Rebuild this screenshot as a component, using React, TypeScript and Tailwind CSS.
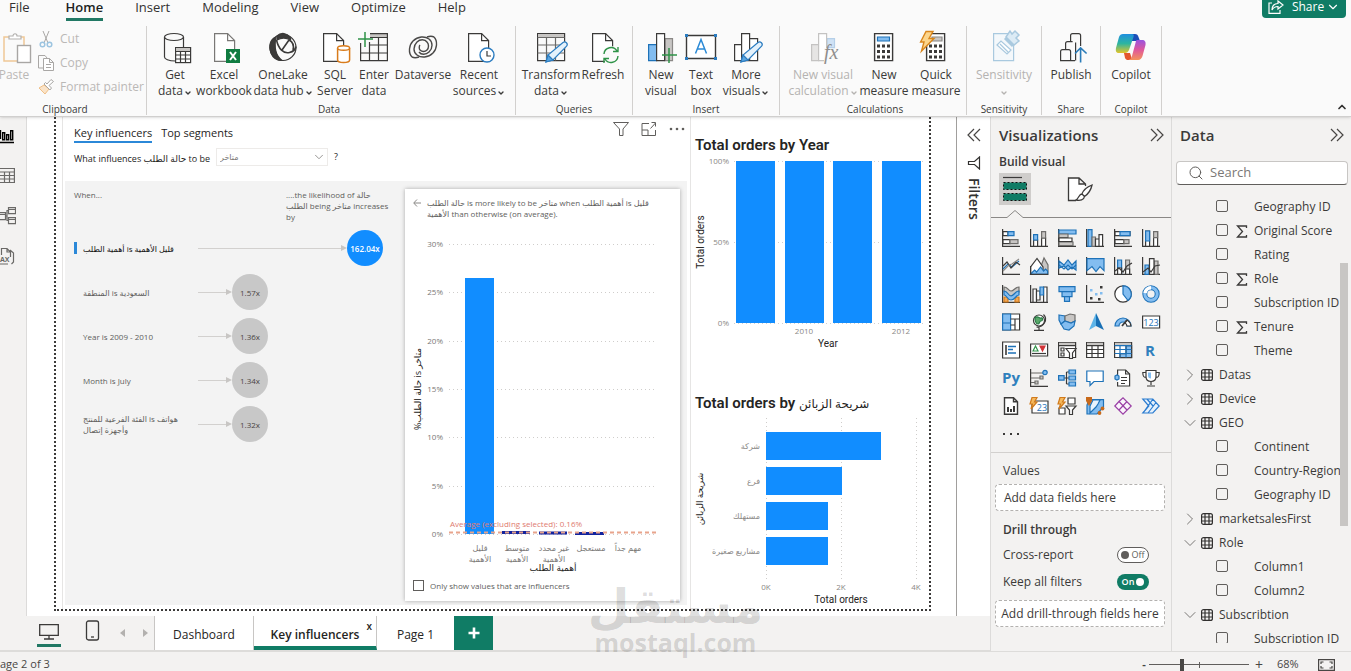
import type { ReactNode } from "react";
import { ChevronDown, ChevronRight, ChevronUp, Search } from "lucide-react";

const INK = "#3b3a39";
const BLUE = "#83bdf0";
const LINE = "#1e72b8";
const GREY = "#c8c6c4";

type IconProps = { children: ReactNode };

/* Ribbon drawings share one 32x30 box */
function RibbonIcon({ children }: IconProps) {
  return (
    <svg
      width="32"
      height="30"
      viewBox="0 0 32 30"
      fill="none"
      stroke={INK}
      strokeWidth="1.2"
      className="shrink-0 overflow-visible"
      aria-hidden="true"
    >
      {children}
    </svg>
  );
}

function DoubleChevron({ left }: { left?: boolean }) {
  return (
    <svg width="14" height="14" viewBox="0 0 14 14" fill="none" stroke="#484644" strokeWidth="1.200" aria-hidden="true">
      <path d={left ? "M7 1L1 7l6 6M13 1L7 7l6 6" : "M1 1l6 6-6 6M7 1l6 6-6 6"} />
    </svg>
  );
}

function Doc({ x = 5, color = INK }: { x?: number; color?: string }) {
  return (
    <g transform={`translate(${x} 0)`} stroke={color}>
      <path d="M.6.6h13l7 7v20.8H.6z" fill="#fff" />
      <path d="M13.600.6v7h7" />
    </g>
  );
}

function Pencil() {
  return (
    <g stroke="#2b7cc0">
      <path d="M11 29l2-7L28 9.500a2.600 2.600 0 0 1 3.600 3.700L18 27z" fill="#e4f1fb" />
      <path d="M11 29l2-7 5 5z" fill="#5aa5e0" />
    </g>
  );
}

function Plus({ x, y }: { x: number; y: number }) {
  return (
    <path
      d={`M${x - 7} ${y}h15M${x} ${y - 7}v15`}
      stroke="#2f9348"
      strokeWidth="1.500"
    />
  );
}

const ribbonIcons: Record<string, ReactNode> = {
  getData: (
    <>
      <path d="M5.500 4v20c0 2 4 4 11 4M24.500 4v11" />
      <ellipse cx="15" cy="4" rx="9.500" ry="3.500" />
      <rect x="16.600" y="14.600" width="15" height="15" fill="#fff" />
      <path d="M17 16.500h14" stroke={GREY} strokeWidth="3" />
      <path d="M16.600 18.500h15M16.600 22h15M16.600 26h15M21.500 18.500v11M26.500 18.500v11" />
    </>
  ),
  excel: (
    <>
      <Doc x={6} color="#7a7876" />
      <rect x="18" y="16" width="14" height="14" fill="#107c41" stroke="none" />
      <path d="M22 19l6 8M28 19l-6 8" stroke="#fff" strokeWidth="2" />
    </>
  ),
  oneLake: (
    <>
      <circle cx="16" cy="14.500" r="13" />
      <path d="M9 4C3 6 1.500 13 4 20c2 5 6 7.500 11 7.500C9 23 7 14 9 4z" fill={INK} />
      <path d="M10 3c4-4 10-3 13 1 1 1 1 2 .5 3C20 5 15 4 10 7z" fill={INK} />
      <path d="M9.500 7c2 9 7 14 13 12.500 4-1 6-3 6.500-6M22 7c4 2 5 6 4 10M15 17l7-10" strokeWidth="1.600" />
    </>
  ),
  sql: (
    <>
      <Doc x={4} />
      <path
        d="M18.600 15v12c0 1.500 2.500 2.500 6 2.500s6-1 6-2.500V15"
        fill="#fff"
        stroke="#d97c1c"
        strokeWidth="1.500"
      />
      <ellipse cx="24.600" cy="15" rx="6" ry="2.300" fill="#fff" stroke="#d97c1c" strokeWidth="1.500" />
    </>
  ),
  enterData: (
    <>
      <path d="M12 2.500h18" stroke={GREY} strokeWidth="3" />
      <path d="M12 .6h17.400v27H2.600V10M12 4.500h17.400M12 12h17.400M2.600 20h26.800M11.500 9v18.600M20.500 4.500v23" />
      <Plus x={7} y={6} />
    </>
  ),
  dataverse: (
    <g strokeWidth="1.400" stroke="#4a4948">
      <path d="M27 4c4 4 3 12-1 16-5 5-12 5-16 2-4-3-4-9 0-13 3-3 8-3 10 0 2 2 2 6 0 8-2 2-5 2-7 0-1-1-1-4 0-5" />
      <path d="M5 24c-4-4-3-12 1-16 5-5 12-5 16-2 4 3 4 9 0 13-3 3-8 3-10 0" />
      <path d="M20 4c3-1 5-1 7 0M12 24c-3 1-5 1-7 0" />
    </g>
  ),
  recent: (
    <>
      <Doc x={5} />
      <circle cx="24" cy="22" r="7" fill="#fff" stroke="#2b7cc0" strokeWidth="1.400" />
      <path d="M24 18v5h4" />
    </>
  ),
  transform: (
    <>
      <path d="M2.600.6h27v27h-27z" />
      <path d="M3 2.500h26" stroke={GREY} strokeWidth="3" />
      <path d="M2.600 4.500h27M2.600 12h27M2.600 20h27M11.500 4.500v23M20.500 4.500v23" stroke="#6a6967" />
      <Pencil />
    </>
  ),
  refresh: (
    <>
      <Doc x={5} />
      <circle cx="24" cy="22" r="9" fill="#fafafa" stroke="none" />
      <path
        d="M17 21a7 7 0 0 1 13-3M31 23a7 7 0 0 1-13 3M31 14v4.500h-5M17 30v-4.500h5"
        stroke="#2f9348"
        strokeWidth="1.400"
      />
    </>
  ),
  newVisual: (
    <>
      <path d="M3.600 11.600h8v16h-8z" fill={BLUE} stroke={LINE} />
      <path d="M20 5.600h7.500v22H20z" fill={GREY} stroke="#8a8886" />
      <path d="M11.600.6h8v27h-8z" fill="#fff" />
      <Plus x={24} y={22} />
    </>
  ),
  textBox: (
    <>
      <path d="M1.500 2.500h29v23h-29z" fill="#fff" strokeWidth="1.400" />
      <path d="M0 1h3v3H0zM29 1h3v3h-3zM0 24h3v3H0zM29 24h3v3h-3z" fill="#2b7cc0" stroke="none" />
      <path d="M10.500 20.500l5.500-14 5.500 14M12.500 16h7" stroke="#2b8ad6" strokeWidth="1.500" />
    </>
  ),
  moreVisuals: (
    <>
      <path d="M4.600 11.600h7v16h-7zM11.600.6h8v27h-8zM19.600 5.600h8v22h-8z" fill="#fff" />
      <Pencil />
    </>
  ),
  visualCalc: (
    <>
      <path d="M4.600 11.600h7v16h-7z" fill="#e6e5e4" stroke="#c4c3c2" />
      <path d="M20 5.600h7.500v9H20z" fill="#cfe2f5" stroke="#b5cfe8" />
      <path d="M11.600.6h8v27h-8z" fill="#fff" stroke="#c4c3c2" />
      <path d="M17 15h4v14h-4z" fill="#fafafa" stroke="none" />
      <text
        x="17"
        y="26"
        fontSize="20"
        fontStyle="italic"
        fontFamily="Liberation Serif, serif"
        fill="#8f8e8d"
        stroke="none"
      >
        fx
      </text>
    </>
  ),
  newMeasure: (
    <>
      <path d="M6.600.6h18v27h-18z" fill="#fff" strokeWidth="1.400" />
      <path d="M9.500 4h12v4h-12z" fill={BLUE} stroke={LINE} />
      <path d="M9 13h13M9 18.500h13M9 24h13" strokeWidth="3" strokeDasharray="3 2" />
    </>
  ),
  quickMeasure: (
    <>
      <path d="M6.600.6h18v27h-18z" fill="#fff" strokeWidth="1.400" />
      <path d="M12 4h10v4H12z" fill={GREY} stroke="#8a8886" />
      <path d="M9 13h13M9 18.500h13M9 24h13" strokeWidth="3" strokeDasharray="3 2" />
      <path d="M6-1.500h7l-4 7h5L1.500 18 4 9H.6z" fill="#fcd58b" stroke="#d9861c" strokeWidth="1.400" />
    </>
  ),
  sensitivity: (
    <g stroke="#a9c9df">
      <path d="M5.600.6h20v27h-20z" fill="#f4f8fb" />
      <path d="M9 12l4-4 10 9-4 4zM12 11l8 8" fill="#fff" />
      <path d="M18 4l8 8 5-4-3-3 3-3-4-4-3 3-2-3z" fill="#dcebf5" strokeWidth="1.500" />
      <path d="M17 5l8 8" strokeWidth="3" />
    </g>
  ),
  publish: (
    <>
      <path d="M5.600 27.600v-9q0-2 2-2h6q2 0 2 2v9zM10.600 16V10.600q0-2 2-2h5M20 27.600h-5M15.600 8V2.600q0-2 2-2h6q2 0 2 2V13M20.600 9.500v18" />
      <path d="M25.600 29.500V15M20 20.500l5.600-5.600 6 5.600" stroke="#2b7cb8" strokeWidth="1.600" />
    </>
  ),
  copilot: (
    <g stroke="none">
      <defs>
        <linearGradient id="cpA" x1="0" y1="0" x2="0" y2="1">
          <stop offset="0" stopColor="#1f8fe0" />
          <stop offset=".5" stopColor="#2db5a0" />
          <stop offset="1" stopColor="#e3c52a" />
        </linearGradient>
        <linearGradient id="cpB" x1="0" y1="0" x2="0" y2="1">
          <stop offset="0" stopColor="#9a53e0" />
          <stop offset=".5" stopColor="#e0589a" />
          <stop offset="1" stopColor="#f4935a" />
        </linearGradient>
      </defs>
      <path d="M14 1h6c2 0 3 1 3.500 3L25 8h-8z" fill="#1b4fb8" />
      <path d="M8 1h9c2 0 2 1 1.500 3L14 17c-1 2-2 3-4 3H4c-3 0-3.500-2-3-5L4 4c.7-2 2-3 4-3z" fill="url(#cpA)" />
      <path d="M9 20h6l2 6c-4 2-6 1-7-1z" fill="#e4572e" />
      <path d="M22 7h5c3 0 4 2 3.500 5L27.500 23c-.7 2-2 4-4.500 4h-9c2-1 2.500-2 3-4l3.500-13c.4-2 .7-3 1.500-3z" fill="url(#cpB)" />
    </g>
  ),
};

type RibbonItem = {
  icon: string;
  lines: string[];
  width: string;
  menu?: boolean;
  off?: boolean;
};

const ribbonGroups: { label: string; className: string; items: RibbonItem[] }[] = [
  {
    label: "Data",
    className: "pl-1.5 pr-2.5",
    items: [
      { icon: "getData", lines: ["Get", "data"], width: "w-11", menu: true },
      { icon: "excel", lines: ["Excel", "workbook"], width: "w-[54px]" },
      { icon: "oneLake", lines: ["OneLake", "data hub"], width: "w-16", menu: true },
      { icon: "sql", lines: ["SQL", "Server"], width: "w-10" },
      { icon: "enterData", lines: ["Enter", "data"], width: "w-[38px]" },
      { icon: "dataverse", lines: ["Dataverse"], width: "w-[60px]" },
      { icon: "recent", lines: ["Recent", "sources"], width: "w-[52px]", menu: true },
    ],
  },
  {
    label: "Queries",
    className: "px-1.5",
    items: [
      { icon: "transform", lines: ["Transform", "data"], width: "w-[58px]", menu: true },
      { icon: "refresh", lines: ["Refresh"], width: "w-[46px]" },
    ],
  },
  {
    label: "Insert",
    className: "px-2",
    items: [
      { icon: "newVisual", lines: ["New", "visual"], width: "w-10" },
      { icon: "textBox", lines: ["Text", "box"], width: "w-10" },
      { icon: "moreVisuals", lines: ["More", "visuals"], width: "w-[50px]", menu: true },
    ],
  },
  {
    label: "Calculations",
    className: "pr-1 pl-2",
    items: [
      { icon: "visualCalc", lines: ["New visual", "calculation"], width: "w-[70px]", menu: true, off: true },
      { icon: "newMeasure", lines: ["New", "measure"], width: "w-[52px]" },
      { icon: "quickMeasure", lines: ["Quick", "measure"], width: "w-[52px]" },
    ],
  },
  {
    label: "Sensitivity",
    className: "px-1",
    items: [{ icon: "sensitivity", lines: ["Sensitivity", ""], width: "w-[66px]", menu: true, off: true }],
  },
  {
    label: "Share",
    className: "px-1",
    items: [{ icon: "publish", lines: ["Publish"], width: "w-[50px]" }],
  },
  {
    label: "Copilot",
    className: "px-1",
    items: [{ icon: "copilot", lines: ["Copilot"], width: "w-[52px]" }],
  },
];

function RibbonButton({ item }: { item: RibbonItem }) {
  return (
    <button
      type="button"
      disabled={item.off}
      className={`${item.width} flex flex-col items-center text-xs leading-4 whitespace-nowrap ${
        item.off ? "text-[#b5b3b1]" : "text-[#3b3a39]"
      }`}
    >
      <RibbonIcon>{ribbonIcons[item.icon]}</RibbonIcon>
      <span className="mt-1">{item.lines[0]}</span>
      {item.lines.length > 1 && (
        <span className="flex h-4 items-center gap-px">
          {item.lines[1]}
          {item.menu && <ChevronDown className="mt-1 size-2" strokeWidth={4} />}
        </span>
      )}
    </button>
  );
}

function Clipboard() {
  const row = "flex items-center gap-1.5 text-xs leading-6";
  return (
    <div className="flex w-[147px] flex-col border-r border-[#d2d0ce]">
      <div className="flex flex-1 text-[#bab8b6]">
        <button type="button" disabled className="flex w-8 flex-col items-center pt-[7px] text-xs leading-4">
          <RibbonIcon>
            <g stroke="#f0c896" strokeWidth="1.500">
              <path d="M17 28H4V4h20v8" />
            </g>
            <path d="M9 6V3h4c0-3 4-3 4 0h4v3z" fill="#fff" stroke="#b3b1af" />
            <rect x="17.500" y="12.500" width="13" height="17" fill="#fff" stroke="#a8a6a4" strokeWidth="1.400" />
          </RibbonIcon>
          <span className="mt-1 pr-1">Paste</span>
        </button>
        <div className="flex flex-col pt-px pl-1.5">
          <button type="button" disabled className={row}>
            <svg width="16" height="18" viewBox="0 0 16 18" fill="none" aria-hidden="true">
              <path d="M5 1l5 12M11 1L6 13" stroke="#a9a7a5" />
              <circle cx="4.500" cy="14.500" r="2.300" stroke="#9cc4e0" strokeWidth="1.500" />
              <circle cx="11.500" cy="14.500" r="2.300" stroke="#9cc4e0" strokeWidth="1.500" />
            </svg>
            Cut
          </button>
          <button type="button" disabled className={row}>
            <svg width="16" height="16" viewBox="0 0 16 16" fill="none" stroke="#a9a7a5" aria-hidden="true">
              <path d="M5 13H.5V.5H7L9 3" />
              <path d="M5.500 3.500h6l4 4v8h-10zM11.500 3.500v4h4M8 9.500h5M8 12.500h5" fill="#fff" />
            </svg>
            Copy
          </button>
          <button type="button" disabled className={`${row} whitespace-nowrap`}>
            <svg width="16" height="16" viewBox="0 0 16 16" fill="none" stroke="#aaa8a6" aria-hidden="true">
              <path d="M6 6L1 9l6 6 4-5z" stroke="#efbf86" fill="#fae3c8" />
              <path d="M6 5l6 6 1.500-2L11 6.500l4.500-4L13 .5 9 5 7.500 3.500z" fill="#fff" />
            </svg>
            Format painter
          </button>
        </div>
      </div>
      <div className="h-3 pr-4 text-center text-[10px] leading-3 text-[#3b3a39]">Clipboard</div>
    </div>
  );
}

function Header() {
  const tabs = ["Insert", "Modeling", "View", "Optimize", "Help"];
  return (
    <header className="relative z-10 h-[117px] shrink-0 border-b border-[#d0cfce] bg-[#fafafa] shadow-sm">
      <div className="flex h-[21px] items-start justify-between pr-[5px] pl-[9px]">
        <nav className="flex gap-8 text-[13px] leading-[14px] text-[#323130]">
          <a href="#file" className="mr-1">File</a>
          <a href="#home" className="h-[21px] border-b-[3px] border-[#217864] font-semibold text-[#201f1e]">
            Home
          </a>
          {tabs.map((t) => (
            <a key={t} href={`#${t.toLowerCase()}`}>{t}</a>
          ))}
        </nav>
        <button
          type="button"
          className="-mt-1.5 flex h-6 w-[84px] items-center justify-center gap-2 rounded bg-[#107c65] pt-0.5 text-xs text-white"
        >
          <svg width="16" height="14" viewBox="0 0 16 14" fill="none" stroke="#fff" strokeWidth="1.200" aria-hidden="true">
            <path d="M4 3H1v10.400h11V10M10 1l5 4-5 4V6.500C7 6.500 5 8 4 10c0-4 2-6.500 6-6.500z" />
          </svg>
          <span className="flex items-center gap-0.5">
            Share
            <ChevronDown className="size-3.5" />
          </span>
        </button>
      </div>
      <div className="flex h-[94px] pt-[5px]">
        <Clipboard />
        {ribbonGroups.map((g) => (
          <div key={g.label} className={`flex flex-col border-r border-[#d2d0ce] ${g.className}`}>
            <div className="flex flex-1 items-start pt-[7px]">
              {g.items.map((item) => (
                <RibbonButton key={item.icon} item={item} />
              ))}
            </div>
            <div className="h-3 text-center text-[10px] leading-3 text-[#3b3a39]">{g.label}</div>
          </div>
        ))}
        <button type="button" aria-label="Collapse ribbon" className="mr-[3px] ml-auto self-end pb-0.5">
          <ChevronUp className="size-3 text-[#323130]" strokeWidth={3.5} />
        </button>
      </div>
    </header>
  );
}

function Rail() {
  return (
    <aside className="flex w-[27px] shrink-0 flex-col gap-[22px] border-r border-[#dcdbda] bg-[#f3f2f1] pt-2.5 text-[#6a6967]">
      <button type="button" aria-label="Report view" className="text-black">
        <svg width="15" height="18" viewBox="0 0 15 18" fill="none" stroke="currentColor" strokeWidth="1.400" aria-hidden="true">
          <path d="M0 15.500h14M.5 3v9M2.700 5.700h2v7h-2zM6.700 7.700h2v5h-2zM10.700 3.700h2v9h-2z" />
        </svg>
      </button>
      <button type="button" aria-label="Table view">
        <svg width="15" height="18" viewBox="0 0 15 18" fill="none" stroke="currentColor" strokeWidth="1.200" aria-hidden="true">
          <path d="M0 1.500h14.400v14H0M0 5h14.400M0 8.500h14.400M0 12h14.400M4.500 5v10.500M9.500 5v10.500" />
        </svg>
      </button>
      <button type="button" aria-label="Model view">
        <svg width="16" height="18" viewBox="0 0 16 18" fill="none" stroke="currentColor" strokeWidth="1.200" aria-hidden="true">
          <path d="M8.500.6h7v6h-7zM8.500 2.500h7M8.500 10.600h7v6h-7zM8.500 12.500h7M0 5.600h5.500v7H0M0 7.500h5.500M5.500 9h1.500V3.500h1.500M7 9v4.500h1.500" />
        </svg>
      </button>
      <button type="button" aria-label="DAX query view">
        <svg width="15" height="18" viewBox="0 0 15 18" fill="none" stroke="currentColor" strokeWidth="1.200" aria-hidden="true">
          <path d="M1.500 8V1.500H7l3.500 3.500v5M7 1.500V5h3.500M10 3l3.500 3v9l-2 2M0 17h8" />
          <text x="0" y="15" fontSize="7" fontWeight="700" fontFamily="Open Sans, sans-serif" fill="currentColor" stroke="none">
            AX
          </text>
        </svg>
      </button>
    </aside>
  );
}

const influencers = [
  { text: ["أهمية الطلب is قليل الأهمية"], value: "162.04x", active: true },
  { text: ["المنطقة is السعودية"], value: "1.57x" },
  { text: ["Year is 2009 - 2010"], value: "1.36x" },
  { text: ["Month is July"], value: "1.34x" },
  { text: ["الفئة الفرعية للمنتج is هواتف", "وأجهزة إتصال"], value: "1.32x" },
];

function InfluencerRow({ text, value, active }: (typeof influencers)[number]) {
  return (
    <li className="flex h-11 items-center">
      <span className={`h-3 w-[3px] shrink-0 ${active ? "bg-[#2b88d8]" : ""}`} />
      <span
        className={`ml-1.5 w-[115px] shrink-0 text-[8px] leading-[11px] whitespace-nowrap ${
          active ? "text-[#111]" : "text-[#605e5c]"
        }`}
      >
        {text.map((t) => (
          <span key={t} className="block">{t}</span>
        ))}
      </span>
      <span className={`flex items-center ${active ? "w-[149px]" : "w-[34px]"}`}>
        <span className="h-px flex-1 bg-[#d2d0ce]" />
        <svg width="6" height="6" viewBox="0 0 6 6" fill="#c8c6c4" aria-hidden="true">
          <path d="M0 0l6 3-6 3z" />
        </svg>
      </span>
      <span
        className={`flex size-9 shrink-0 items-center justify-center rounded-full text-[8px] ${
          active ? "bg-[#118dff] font-semibold text-white" : "bg-[#c8c8c8] text-[#484644]"
        }`}
      >
        {value}
      </span>
    </li>
  );
}

const shareTicks = ["30%", "25%", "20%", "15%", "10%", "5%", "0%"];
const shareCategories = [
  ["قليل", "الأهمية"],
  ["متوسط", "الأهمية"],
  ["غير محدد", "الأهمية"],
  ["مستعجل"],
  ["مهم جداً"],
];

function ShareChart() {
  return (
    <svg width="275" height="352" viewBox="0 0 275 352" fontSize="8" fill="#7a7876" className="block">
      {shareTicks.map((t, i) => {
        const y = Math.round(19 + i * 48.300);
        return (
          <g key={t}>
            <path d={`M44 ${y}.5H251`} stroke="#cfcdcb" strokeDasharray="1 3" />
            <text x="38" y={y + 3} textAnchor="end">{t}</text>
          </g>
        );
      })}
      <rect x="60" y="53" width="29" height="256" fill="#118dff" />
      <path d="M97 307.500h28M134 308h28M170 308.500h29" stroke="#12239e" strokeWidth="3" />
      <path d="M44 307.500h207" stroke="#e8a48c" strokeWidth="2" strokeDasharray="4 3" />
      <text x="45" y="302" fill="#e07b70">Average (excluding selected): 0.16%</text>
      {shareCategories.map((lines, i) =>
        lines.map((l, j) => (
          <text key={`${i}-${j}`} x={75 + i * 37} y={326 + j * 11} textAnchor="middle">{l}</text>
        ))
      )}
      <text x="148" y="346" fontSize="9" fill="#252423" textAnchor="middle">أهمية الطلب</text>
      <text transform="translate(16 164) rotate(-90)" fontSize="9" fill="#252423" textAnchor="middle">
        %حالة الطلب is متاخر
      </text>
    </svg>
  );
}

function KeyInfluencers() {
  return (
    <section className="ml-1.5 flex flex-1 flex-col border-x border-[#e6e5e4] pr-[3px] pl-0.5">
      <div className="flex items-start justify-between pr-0.5 pl-[9px]">
        <div className="flex gap-[9px] pt-[7px] text-[11px] leading-4 text-[#252423]">
          <button type="button" className="h-[19px] border-b-2 border-[#2b88d8]">Key influencers</button>
          <button type="button" className="h-[19px] border-b-2 border-transparent">Top segments</button>
        </div>
        <div className="flex items-center gap-3 pt-1 text-[#605e5c]">
          <svg width="16" height="16" viewBox="0 0 16 16" fill="none" stroke="currentColor" aria-hidden="true">
            <path d="M.5 1.500h15L10 8v6.500H6.500V8z" />
          </svg>
          <svg width="16" height="16" viewBox="0 0 16 16" fill="none" stroke="currentColor" aria-hidden="true">
            <path d="M8 2.500H1v12h13.500V9M1 9h6v5.500M9.500 7.500L14.500 2M10.500 1.500h4v4" />
          </svg>
          <svg width="16" height="16" viewBox="0 0 16 16" fill="currentColor" aria-hidden="true">
            <circle cx="2" cy="8" r="1.300" />
            <circle cx="8" cy="8" r="1.300" />
            <circle cx="14" cy="8" r="1.300" />
          </svg>
        </div>
      </div>
      <div className="mt-[5px] flex h-[18px] items-center pl-[9px] text-[9px] text-[#252423]">
        <label htmlFor="outcome" className="mt-1 w-[142px] whitespace-nowrap">
          What influences حالة الطلب to be
        </label>
        <span className="relative flex w-[112px] items-center">
          <select
            id="outcome"
            className="h-[18px] w-full appearance-none border border-[#edebe9] bg-white pl-[3px] text-[8px] text-[#7a7876]"
          >
            <option>متاخر</option>
          </select>
          <ChevronDown className="pointer-events-none absolute right-0.5 size-3.5 text-[#8a8886]" strokeWidth={1.5} />
        </span>
        <span className="ml-1.5">?</span>
      </div>
      <div className="mt-[15px] mb-1 flex flex-1 bg-[#f3f3f3] text-[8px] leading-[11px] text-[#605e5c]">
        <div className="flex flex-1 flex-col pt-2 pl-[9px]">
          <div className="flex h-[37px]">
            <span className="w-[212px]">When...</span>
            <span className="whitespace-nowrap">
              ....the likelihood of حالة
              <br />
              الطلب being متاخر increases
              <br />
              by
            </span>
          </div>
          <ul>
            {influencers.map((r) => (
              <InfluencerRow key={r.value} {...r} />
            ))}
          </ul>
        </div>
        <div className="mt-2 mr-[7px] mb-1 w-[275px] shrink-0 bg-white pt-2 shadow-[0_0_4px_rgba(0,0,0,0.3)]">
          <div className="flex h-7 gap-1.5 pl-2">
            <button type="button" aria-label="Back" className="h-3">
              <svg width="8" height="8" viewBox="0 0 8 8" fill="none" stroke="#8a8886" aria-hidden="true">
                <path d="M8 4H1M4 .5L.700 4 4 7.500" />
              </svg>
            </button>
            <p className="whitespace-nowrap">
              حالة الطلب is more likely to be متاخر when أهمية الطلب is قليل
              <br />
              الأهمية than otherwise (on average).
            </p>
          </div>
          <ShareChart />
          <label className="flex h-4 items-center gap-1.5 pl-2">
            <input type="checkbox" className="size-[11px] appearance-none border border-[#605e5c] bg-white" />
            Only show values that are influencers
          </label>
        </div>
      </div>
    </section>
  );
}

function YearChart() {
  return (
    <svg width="238" height="200" viewBox="0 0 238 200" fontSize="8" fill="#8a8886" className="block">
      {["100%", "50%", "0%"].map((t, i) => (
        <g key={t}>
          <path d={`M43 ${4 + i * 81}.5H232`} stroke="#d2d0ce" strokeDasharray="1 3" />
          <text x="38" y={7 + i * 81} textAnchor="end">{t}</text>
        </g>
      ))}
      {[45, 94, 142, 191].map((x) => (
        <rect key={x} x={x} y="4" width="39" height="162" fill="#118dff" />
      ))}
      <text x="113" y="177" textAnchor="middle">2010</text>
      <text x="210" y="177" textAnchor="middle">2012</text>
      <g fontFamily="Roboto, sans-serif" fontSize="10" fill="#252423" textAnchor="middle">
        <text x="137" y="190">Year</text>
        <text transform="translate(13 85) rotate(-90)">Total orders</text>
      </g>
    </svg>
  );
}

const segments = [
  { name: "شركة", width: 115 },
  { name: "فرع", width: 76 },
  { name: "مستهلك", width: 62 },
  { name: "مشاريع صغيرة", width: 62 },
];

function SegmentChart() {
  return (
    <svg width="238" height="192" viewBox="0 0 238 192" fontSize="8" fill="#8a8886" className="block">
      {["0K", "2K", "4K"].map((t, i) => (
        <g key={t}>
          <path d={`M${75 + i * 75}.5 3V165`} stroke="#cfcdcb" strokeDasharray="1 3" />
          <text x={75 + i * 75} y="175" textAnchor="middle">{t}</text>
        </g>
      ))}
      {segments.map((s, i) => (
        <g key={s.name}>
          <rect x="75" y={17 + i * 35} width={s.width} height="28" fill="#118dff" />
          <text x="69" y={34 + i * 35} textAnchor="end">{s.name}</text>
        </g>
      ))}
      <g fontFamily="Roboto, DejaVu Sans, sans-serif" fontSize="10" fill="#252423" textAnchor="middle">
        <text x="150" y="188">Total orders</text>
        <text transform="translate(12 84) rotate(-90)" fontSize="9">شريحة الزبائن</text>
      </g>
    </svg>
  );
}

function Canvas() {
  const title =
    "pl-1 font-['Roboto','DejaVu_Sans',sans-serif] text-[15px] font-semibold leading-6 text-[#252423] whitespace-nowrap";
  return (
    <main className="flex flex-1 flex-col bg-white">
      <div className="mr-[25px] mb-[5px] ml-[27px] flex flex-1 border-2 border-t-0 border-dotted border-[#3b3a39]">
        <KeyInfluencers />
        <div className="w-[238px] shrink-0 pt-4">
          <h3 className={title}>Total orders by Year</h3>
          <YearChart />
          <h3 className={`${title} mt-[34px]`}>
            Total orders by <span className="text-xs font-normal">شريحة الزبائن</span>
          </h3>
          <SegmentChart />
        </div>
      </div>
    </main>
  );
}

function FiltersPane() {
  return (
    <aside className="flex w-[34px] shrink-0 flex-col items-center border-l border-[#a19f9d] bg-white pt-[11px] text-[#323130]">
      <button type="button" aria-label="Expand filters">
        <DoubleChevron left />
      </button>
      <svg width="14" height="14" viewBox="0 0 14 14" fill="none" stroke="currentColor" strokeWidth="1.200" className="mt-3.5" aria-hidden="true">
        <path d="M12.500 1v12L7.500 8.500H1.500v-3h6z" />
      </svg>
      <span className="mt-2 text-sm leading-4 font-semibold [writing-mode:vertical-rl]">Filters</span>
    </aside>
  );
}

function PageTabs() {
  return (
    <div className="flex h-[35px] shrink-0 items-stretch border-b border-[#dddcda] bg-[#f3f2f1] pl-[37px] text-xs text-[#252423]">
      <button type="button" aria-label="Desktop layout" className="my-[3px] flex w-6 items-center justify-center border-b-[3px] border-[#217864]">
        <svg width="20" height="16" viewBox="0 0 20 16" fill="none" stroke="#3b3a39" strokeWidth="1.300" aria-hidden="true">
          <path d="M.7.7h18.600v10.600H.7zM10 11.300V15M5 15h10" />
        </svg>
      </button>
      <button type="button" aria-label="Mobile layout" className="ml-6 flex items-center pb-1">
        <svg width="15" height="22" viewBox="0 0 15 22" fill="none" stroke="#3b3a39" strokeWidth="1.300" aria-hidden="true">
          <rect x="1.500" y="1" width="12" height="19" rx="2" />
          <path d="M6 17h3" />
        </svg>
      </button>
      <div className="mr-1.5 ml-5 flex w-7 items-center justify-between text-[#b3b1af]">
        <svg width="5" height="8" viewBox="0 0 5 8" fill="currentColor" aria-hidden="true"><path d="M5 0v8L0 4z" /></svg>
        <svg width="5" height="8" viewBox="0 0 5 8" fill="currentColor" aria-hidden="true"><path d="M0 0v8l5-4z" /></svg>
      </div>
      <button type="button" className="w-[100px] border-x border-[#c8c6c4] bg-white pt-1">Dashboard</button>
      <button type="button" className="relative w-[123px] border-r border-b-4 border-r-[#c8c6c4] border-b-[#107c65] bg-white pt-2 font-semibold">
        Key influencers
        <span className="absolute top-1 right-1 text-[10px] leading-3">x</span>
      </button>
      <button type="button" className="w-[77px] bg-white pt-1">Page 1</button>
      <button type="button" aria-label="New page" className="flex w-[39px] items-center justify-center bg-[#107c65]">
        <svg width="12" height="12" viewBox="0 0 12 12" stroke="#fff" strokeWidth="2.600" aria-hidden="true">
          <path d="M6 .5v11M.5 6h11" />
        </svg>
      </button>
    </div>
  );
}

const axis = <path d="M.6 0v17.400H18" />;
const b = { fill: BLUE, stroke: LINE };
const g = { fill: GREY, stroke: "#6f6e6c" };
const w = { fill: "#fff" };

/* 18x18 drawings for the visual gallery, six in a row */
const visuals: [string, ReactNode][] = [
  ["Stacked bar chart", <>{axis}<path d="M1 2.600h5v4H1zM1 10.600h7v4H1z" {...w} /><path d="M6 2.600h6v4H6z" {...b} /><path d="M8 10.600h8v4H8z" {...g} /></>],
  ["Stacked column chart", <>{axis}<path d="M3.600 11h4v6.400h-4zM11.600 9h4v8.400h-4z" {...w} /><path d="M3.600 5.600h4V11h-4z" {...b} /><path d="M11.600 2.600h4V9h-4z" {...g} /></>],
  ["Clustered bar chart", <>{axis}<path d="M1 1h17v4H1z" {...b} /><path d="M1 5h9v3.500H1zM1 13h14v3.500H1z" {...g} /><path d="M1 9h13v3.500H1z" {...w} /></>],
  ["Clustered column chart", <>{axis}<path d="M2 .6h4v16.800H2z" {...b} /><path d="M6 8h3.500v9.400H6z" {...g} /><path d="M9.500 10h3.500v7.400H9.500zM13 5.600h3.600v11.800H13z" {...w} /></>],
  ["100% stacked bar chart", <>{axis}<path d="M1 2.600h15v4H1zM1 10.600h9v4H1z" {...w} /><path d="M6 2.600h10v4H6z" {...b} /><path d="M10 10.600h5v4h-5z" {...g} /></>],
  ["100% stacked column chart", <>{axis}<path d="M3.600 2h4v15.400h-4zM11.600 2.600h4v14.800h-4z" {...w} /><path d="M3.600 2h4v10h-4z" {...b} /><path d="M11.600 2.600h4v6h-4z" {...g} /></>],
  ["Line chart", <>{axis}<path d="M1 12l5-5 4 3 7-6" stroke={LINE} /><path d="M1 9l4-4 4 6 5-6 4 3" /><path d="M1 14l6-6 3-1 7-5" stroke="#8a8886" /></>],
  ["Area chart", <><path d="M8 17.400L14 1l4 7v9.400z" {...g} /><path d="M.6 17.400V10L7 1.500 13 10v7.400z" {...w} /><path d="M.6 17l4-4 2 2 4-5 3 4 2-2 2 2v3.400z" {...b} /><path d="M.6 9v8.400H18" /></>],
  ["Stacked area chart", <>{axis}<path d="M1 4l5 4 4-5 4 5 4-4v9l-4-3-4 3-4-4-5 2z" {...b} /><path d="M1 8l5 4 4-4 4 4 4-4" stroke={LINE} /></>],
  ["100% stacked area chart", <>{axis}<path d="M1 1.600h17v12l-4-4-4 5-4-5-5 4z" {...b} /></>],
  ["Line and stacked column chart", <>{axis}<path d="M3.600 3h4v14h-4z" {...b} /><path d="M11.600 3h4v14h-4z" {...g} /><path d="M3.600 11h4v6.400h-4zM11.600 12h4v5.400h-4z" {...w} /><path d="M1 14l4-3 4 4 4-6 5-3" /></>],
  ["Line and clustered column chart", <>{axis}<path d="M3 8h4v9.400H3z" {...b} /><path d="M12 4h4v13.400h-4z" {...g} /><path d="M7.500 1.600H12v15.800H7.500z" {...w} /><path d="M1 15l5-4 3 4 4-6 5-1" /></>],
  ["Ribbon chart", <>{axis}<path d="M2 12h4v5H2zM13 12h4v5h-4z" fill="#f2a654" stroke="#d07a1c" /><path d="M2 2c4 0 4 4 7 4s4-4 8-4v5c-4 0-4 4-8 4S6 7 2 7z" {...g} /><path d="M2 6c4 0 4 5 7 5s4-5 8-5v4c-3 0-4 5-8 5s-4-5-7-5z" {...b} /></>],
  ["Waterfall chart", <>{axis}<path d="M3 4h3.500v13.400H3zM13.600 2H17v15.400h-3.400z" {...w} /><path d="M6.500 6h3.500v9H6.500z" {...w} /><path d="M10 2h3.500v8H10z" {...b} /></>],
  ["Funnel", <><path d="M1 1.600h16v5H1z" {...b} /><path d="M4 6.600h10v5H4z" {...b} /><path d="M6.500 11.600h5v4.800h-5z" {...b} /></>],
  ["Scatter chart", <>{axis}<path d="M14 1h2.500v2.500H14zM4 12h2.500v2.500H4zM12 13h2.500v2.500H12z" fill={INK} stroke="none" /><path d="M4 4h2.500v2.500H4zM9 8h2.500v2.500H9zM14 7h2.500v2.500H14z" fill={BLUE} stroke="none" /></>],
  ["Pie chart", <><circle cx="9" cy="9" r="8.200" {...w} /><path d="M9 .8a8.200 8.200 0 0 1 5 14.700L9 9z" {...b} /></>],
  ["Donut chart", <><circle cx="9" cy="9" r="6.200" stroke={LINE} strokeWidth="5" /><circle cx="9" cy="9" r="6.200" stroke={BLUE} strokeWidth="3" /><path d="M9 2.800A6.200 6.200 0 0 0 3 8" stroke="#fff" strokeWidth="3.500" /></>],
  ["Treemap", <><path d="M.6 1h17v16H.6z" {...w} /><path d="M.6 1h8v9h-8zM.6 10h8v7h-8z" {...b} /><path d="M8.600 6h9M13 6v11M8.600 12H13" /></>],
  ["Map", <><circle cx="9" cy="7.500" r="5.500" fill="#fff" /><path d="M5 5c3-3 4 1 6 0s2 3 0 3-1 3-3 3-3-3-3-6z" fill="#5aa86a" stroke="#2a7d46" /><path d="M13.500 1.500c5 5 0 13-7 12.500M9 14.500v3M4 17.400h10" /></>],
  ["Filled map", <><path d="M1 2l6 1v5l-4 3-2-4z" {...b} /><path d="M7 3l5-2 5 1v6l-4 2-6-2z" {...g} /><path d="M3 11l4-3 6 2 4-2-1 5-5 4-5-1z" {...b} /></>],
  ["Azure map", <><path d="M10 0L3 17l7-4z" fill="#5db4e8" stroke="none" /><path d="M10 0l8 17-8-4z" fill="#1870b5" stroke="none" /></>],
  ["Gauge", <><path d="M1 13a8 8 0 0 1 16 0h-4a4 4 0 0 0-8 0z" {...b} /><path d="M13 7a8 8 0 0 1 4 6h-4a4 4 0 0 0-2-3z" {...w} /><path d="M8 13l5-6" strokeWidth="1.800" /></>],
  ["Card", <><path d="M.6 3h17v12H.6z" {...w} /><text x="9" y="12.500" fontSize="9" textAnchor="middle" fill={LINE} stroke="none">123</text></>],
  ["Multi-row card", <><path d="M.6 1h17v16H.6z" {...w} /><path d="M4 4v10" strokeWidth="1.600" /><path d="M6 5.500h8M6 8.500h5M6 12h8" stroke={LINE} strokeWidth="1.500" /></>],
  ["KPI", <><path d="M.6 3h17v12H.6z" {...w} /><path d="M3 10l2.500-5L8 10z" stroke="#2f9348" /><path d="M10 5h5l-2.500 5z" fill="#d13438" stroke="#d13438" /><path d="M2 12.500h14" /></>],
  ["Slicer", <><path d="M.6 1.500h17v15H.6z" {...w} /><path d="M1 3h16" stroke={GREY} strokeWidth="2.500" /><path d="M.6 4.600h17M3 7h3v3H3zM3 12h3v3H3z" /><path d="M8 7.500h10L14.500 12v5.500h-3V12z" {...w} /></>],
  ["Table", <><path d="M.6 1.500h17v15H.6z" {...w} /><path d="M1 3h16" stroke={GREY} strokeWidth="2.500" /><path d="M.6 4.600h17M.6 8.500h17M.6 12.500h17M6 4.600v12M12 4.600v12" /></>],
  ["Matrix", <><path d="M.6 1.500h17v15H.6z" {...w} /><path d="M12 4.600h5.600v12H6v-4h6z" fill={BLUE} /><path d="M1 3h16" stroke={GREY} strokeWidth="2.500" /><path d="M.6 4.600h17M.6 8.500h17M.6 12.500h17M6 4.600v12M12 4.600v12" stroke={LINE} /></>],
  ["R script visual", <text x="8" y="14.500" fontSize="15" fontWeight="700" textAnchor="middle" fill="#2f80bd" stroke="none">R</text>],
  ["Python visual", <text x="9" y="14" fontSize="15" fontWeight="700" textAnchor="middle" fill="#2f80bd" stroke="none">Py</text>],
  ["Key influencers", <>{axis}<path d="M1 4h13M1 9h9M1 13.500h4" stroke="#6a6967" /><circle cx="15" cy="3.500" r="2.200" {...b} /><path d="M10 7h3v3h-3zM5 12h3v3H5z" {...g} /></>],
  ["Decomposition tree", <><path d="M6 9h5M8.500 3v12M8.500 3H11M8.500 15H11" /><path d="M.6 6.600h5.500v4.500H.6zM11 1h6.500v4H11zM11 7h6.500v4H11zM11 13h6.500v4H11z" {...b} /></>],
  ["Q&A", <path d="M.8 2h16.400v10.500H8L4 16.500v-4H.8z" fill="#fff" stroke={LINE} />],
  ["Smart narrative", <><path d="M3.600 6V1h8l4 4v12h-12v-4" {...w} /><path d="M11.600 1v4h4M7 8.500h6M7 11.500h6M7 14.500h4" /><path d="M1 7l2-1 2 1v3l-2 1-2-1z" {...b} /></>],
  ["Metrics", <><path d="M4 1.500h10v6c0 3-2 5-5 5s-5-2-5-5zM9 12.500V16M5 17h8M4 3.500H.8c0 4 1 5 3.500 5M14 3.500h3.200c0 4-1 5-3.500 5" {...w} /><path d="M6 3.500h3v6c-2 0-3-1-3-3z" fill={BLUE} stroke="none" /></>],
  ["Paginated report", <><path d="M2.500.8h9l4 4v12.500h-13zM11.500.8v4h4" {...w} strokeWidth="1.400" /><path d="M6 10v5M9 12v3M12 9v6" strokeWidth="2" /></>],
  ["Card (new)", <><path d="M2 4h16v12H2z" {...w} /><text x="12" y="13.500" fontSize="9" textAnchor="middle" fill={LINE} stroke="none">23</text><path d="M2 .5h5L4.500 5H7L1 12l1.500-5H0z" fill="#f5b95d" stroke="#d07a1c" /></>],
  ["Slicer (new)", <><path d="M10 1h7v6h-7zM1 11h6v6H1z" {...w} /><path d="M2 .5h5L4.500 5H7L1 12l1.500-5H0z" fill="#f5b95d" stroke="#d07a1c" /><path d="M8 9h10l-3.500 4v4.500h-3V13z" {...w} /></>],
  ["ArcGIS map", <><path d="M3 2.600h14.500V10L11 17H1V8z" fill={BLUE} stroke={LINE} /><path d="M7 3h7l-2 4-2 3-6 6V9z" fill="#e8f3fc" stroke={LINE} /><path d="M0 0h6v4L3 9 0 4z" fill="#c8691a" stroke="none" /><circle cx="16.500" cy="11.500" r="1.900" fill="#c8691a" stroke="none" /><circle cx="13.500" cy="16" r="1.900" fill="#c8691a" stroke="none" /></>],
  ["Power Apps", <path d="M5 4.500L9 .8l8.200 8.200L9 17.200.8 9 5 4.500l8 8.500M13 4.500L5 13" fill="#fbf4fc" stroke="#9a3fa5" />],
  ["Power Automate", <path d="M.8 2h10l6.400 7-6.400 7h-10l6-7zM5 2l6 7M6 16L14 5.500M1 16L11 2" fill="#e5f1fc" stroke="#2b7cd0" />],
];

function Switch({ label, on }: { label: string; on?: boolean }) {
  return (
    <label className="flex h-[27px] items-center justify-between pr-[22px] pl-3">
      {label}
      <input type="checkbox" role="switch" defaultChecked={on} className="peer sr-only" />
      <span
        className={`flex h-4 w-8 items-center justify-center gap-0.5 rounded-full text-[9px] leading-3 ${
          on ? "bg-[#107c65] font-semibold text-white" : "border border-[#605e5c] bg-white text-[#605e5c]"
        }`}
      >
        {on && "On"}
        <span className={`size-2 rounded-full ${on ? "bg-white" : "bg-[#605e5c]"}`} />
        {!on && "Off"}
      </span>
    </label>
  );
}

function VisualizationsPane() {
  const field =
    "mr-1.5 ml-1 h-[27px] rounded-sm border border-dashed border-[#b3b1af] bg-white text-center leading-[26px] whitespace-nowrap";
  return (
    <aside className="flex w-[181px] shrink-0 flex-col border-l border-[#dcdbda] bg-[#f3f2f1] text-xs text-[#3b3a39]">
      <div className="flex h-9 items-center justify-between pr-[7px] pl-2">
        <h2 className="text-[15px] leading-5 font-semibold">Visualizations</h2>
        <button type="button" aria-label="Collapse visualizations"><DoubleChevron /></button>
      </div>
      <p className="pl-2 leading-[18px] font-semibold">Build visual</p>
      <div className="flex h-[46px] items-start gap-9 pt-0.5 pl-2">
        <button type="button" aria-label="Build visual" className="flex h-8 w-8 items-center justify-center bg-[#cfcdcb]">
          <svg width="26" height="26" viewBox="0 0 26 26" aria-hidden="true">
            <path d="M1 1.500h19" stroke={INK} strokeWidth="1.200" />
            <path d="M1.500 6.500h23v7h-23zM1.500 17.500h23v7h-23z" fill="#107c65" stroke="#111" strokeDasharray="2 2" />
          </svg>
        </button>
        <button type="button" aria-label="Format visual" className="mt-1">
          <svg width="26" height="25" viewBox="0 0 26 25" fill="none" stroke={INK} strokeWidth="1.300" aria-hidden="true">
            <path d="M9 23.500H1.500V1H12l6.500 6v2M12 1v6h6.500" fill="#fff" />
            <path d="M25 8c-5 2-9 6-10 9l2.500 2.500C21 17 24 13 25 8zM15 17c-3 0-3 4-6 6 4 1 8 0 8.500-3.500z" fill="#fff" />
          </svg>
        </button>
      </div>
      <svg width="100%" height="8" className="-mt-[7px] block shrink-0" aria-hidden="true">
        <path d="M0 7.500H16l8-7 8 7H180" fill="none" stroke="#8a8886" />
      </svg>
      <div className="grid grid-cols-[repeat(6,28px)] pt-1.5 pl-1.5">
        {visuals.map(([name, drawing]) => (
          <button key={name} type="button" aria-label={name} className="flex h-7 items-center justify-center">
            <svg width="18" height="18" viewBox="0 0 18 18" fill="none" stroke={INK} strokeWidth="1.200" className="overflow-visible">
              {drawing}
            </svg>
          </button>
        ))}
      </div>
      <button type="button" aria-label="More visuals" className="mt-2 ml-3 flex h-3 w-4 items-center justify-between">
        <span className="size-0.5 bg-[#3b3a39]" />
        <span className="size-0.5 bg-[#3b3a39]" />
        <span className="size-0.5 bg-[#3b3a39]" />
      </button>
      <div className="mt-3 border-t border-[#d2d0ce] pt-[9px]">
        <p className="pb-1 pl-3 leading-[18px]">Values</p>
        <div className={`${field} pr-10`}>Add data fields here</div>
        <p className="pt-2.5 pl-3 leading-[18px] font-semibold">Drill through</p>
        <div className="pt-0.5 pb-[5px]">
          <Switch label="Cross-report" />
          <Switch label="Keep all filters" on />
        </div>
        <div className={field}>Add drill-through fields here</div>
      </div>
    </aside>
  );
}

type Row = { name: string; kind: "field" | "sum" | "closed" | "open" };

const rows: Row[] = [
  { name: "Geography ID", kind: "field" },
  { name: "Original Score", kind: "sum" },
  { name: "Rating", kind: "field" },
  { name: "Role", kind: "sum" },
  { name: "Subscription ID", kind: "field" },
  { name: "Tenure", kind: "sum" },
  { name: "Theme", kind: "field" },
  { name: "Datas", kind: "closed" },
  { name: "Device", kind: "closed" },
  { name: "GEO", kind: "open" },
  { name: "Continent", kind: "field" },
  { name: "Country-Region", kind: "field" },
  { name: "Geography ID", kind: "field" },
  { name: "marketsalesFirst", kind: "closed" },
  { name: "Role", kind: "open" },
  { name: "Column1", kind: "field" },
  { name: "Column2", kind: "field" },
  { name: "Subscribtion", kind: "open" },
  { name: "Subscription ID", kind: "field" },
];

function FieldRow({ row }: { row: Row }) {
  if (row.kind === "field" || row.kind === "sum") {
    return (
      <label className="flex h-6 items-center pl-11 whitespace-nowrap">
        <input type="checkbox" className="mb-0.5 size-3 shrink-0 appearance-none rounded-xs border border-[#605e5c] bg-transparent" />
        <span className="w-[26px] shrink-0 pl-2">
          {row.kind === "sum" && (
            <svg width="12" height="13" viewBox="0 0 12 13" fill="none" stroke="#3b3a39" strokeWidth="1.300" aria-hidden="true">
              <path d="M10.500 3V1H1.500l5 5.500-5 5.500h9v-2" />
            </svg>
          )}
        </span>
        {row.name}
      </label>
    );
  }
  return (
    <button type="button" className="flex h-6 w-full items-center pl-2 whitespace-nowrap">
      {row.kind === "open" ? (
        <ChevronDown className="size-5 text-[#7a7876]" strokeWidth={1.2} />
      ) : (
        <ChevronRight className="size-5 text-[#7a7876]" strokeWidth={1.2} />
      )}
      <svg width="12" height="12" viewBox="0 0 12 12" fill="none" stroke="#323130" strokeWidth="1.200" className="mr-1.5 ml-px" aria-hidden="true">
        <rect x=".6" y=".6" width="10.800" height="10.800" rx="2" />
        <path d="M4 .6v10.800M8 .6v10.800M.6 4h10.800M.6 8h10.800" />
      </svg>
      {row.name}
    </button>
  );
}

function DataPane() {
  return (
    <aside className="flex w-[180px] shrink-0 flex-col border-l border-[#dcdbda] bg-[#f3f2f1] text-xs text-[#3b3a39]">
      <div className="flex h-9 items-center justify-between pr-[7px] pl-2">
        <h2 className="text-[15px] leading-5 font-semibold">Data</h2>
        <button type="button" aria-label="Collapse data"><DoubleChevron /></button>
      </div>
      <label className="mt-2 mr-[3px] ml-1 flex h-6 items-center gap-1.5 rounded border border-[#c8c6c4] border-b-[#605e5c] bg-white pl-[11px]">
        <Search className="size-4 shrink-0 text-[#605e5c]" strokeWidth={1.5} />
        <input type="search" placeholder="Search" aria-label="Search" className="w-full min-w-0 bg-transparent text-[13px] outline-none placeholder:text-[#7a7876]" />
      </label>
      <div className="relative mt-2.5 mb-2 min-h-0 flex-1 basis-0 overflow-hidden">
        {rows.map((r, i) => (
          <FieldRow key={i} row={r} />
        ))}
        <span className="absolute top-[68px] right-[3px] h-[263px] w-2 bg-[#c8c6c4]" />
      </div>
    </aside>
  );
}

function StatusBar() {
  return (
    <footer className="h-5 shrink-0 border-t border-[#dddcda] bg-[#f3f2f1] text-[11px] text-[#484644]">
      <div className="flex h-[25px] items-center justify-between pr-4">
        <span>age 2 of 3</span>
        <div className="flex items-center">
          <button type="button" aria-label="Zoom out" className="w-2.5 text-center font-bold">-</button>
          <span className="relative flex w-[100px] items-center">
            <span className="absolute left-1/2 h-1.5 w-px bg-[#605e5c]" />
            <input
              type="range"
              min="0"
              max="100"
              defaultValue="32"
              aria-label="Zoom"
              className="h-px w-full appearance-none bg-[#605e5c] [&::-webkit-slider-thumb]:h-3 [&::-webkit-slider-thumb]:w-1 [&::-webkit-slider-thumb]:appearance-none [&::-webkit-slider-thumb]:bg-[#484644]"
            />
          </span>
          <button type="button" aria-label="Zoom in" className="w-5 text-center text-sm">+</button>
          <span className="ml-2 w-[31px]">68%</span>
          <button type="button" aria-label="Fit to page" className="ml-2.5">
            <svg width="17" height="12" viewBox="0 0 17 12" fill="none" stroke="#484644" strokeWidth="1.200" aria-hidden="true">
              <path d="M.6.6h15.800v10.800H.6zM3 5V3h2.500M11.500 3H14v2M14 7v2h-2.500M5.500 9H3V7" />
            </svg>
          </button>
        </div>
      </div>
    </footer>
  );
}

export default function App() {
  return (
    <div className="relative flex h-screen flex-col overflow-hidden bg-[#f3f2f1] font-['Open_Sans','DejaVu_Sans',sans-serif]">
      <Header />
      <div className="flex min-h-0 flex-1">
        <div className="flex min-w-0 flex-1 flex-col">
          <div className="flex min-h-0 flex-1">
            <Rail />
            <Canvas />
            <FiltersPane />
          </div>
          <PageTabs />
        </div>
        <VisualizationsPane />
        <DataPane />
      </div>
      <StatusBar />
      {/* Watermark */}
      <div className="pointer-events-none absolute bottom-[17px] left-1/2 flex -translate-x-1/2 flex-col items-center font-bold text-black/15">
        <span className="text-[48px] leading-[50px]">مستقل</span>
        <span className="text-[25px] leading-6">mostaql.com</span>
      </div>
    </div>
  );
}
